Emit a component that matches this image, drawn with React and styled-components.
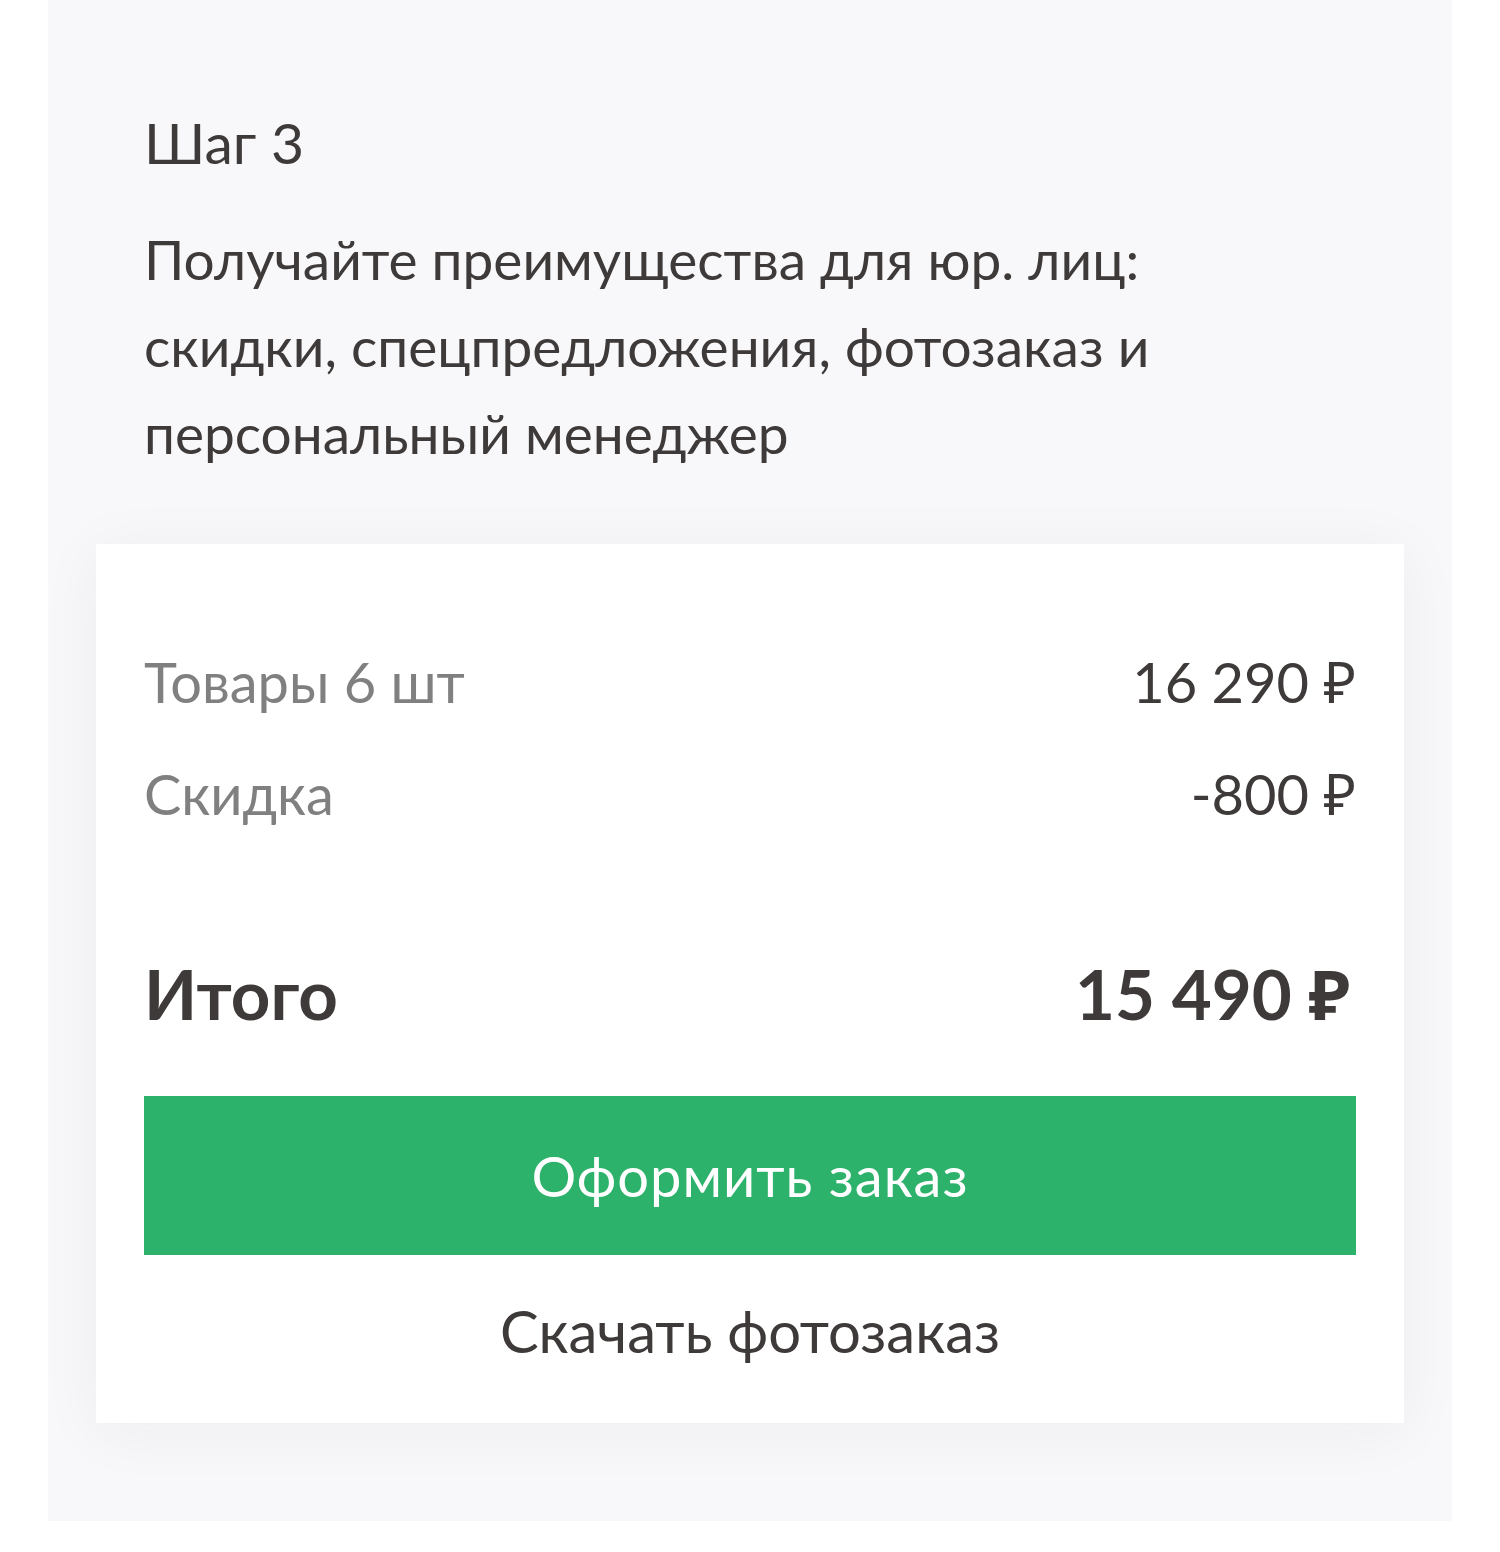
import React from 'react'
import styled, { createGlobalStyle } from 'styled-components'

const GlobalStyle = createGlobalStyle`
  body {
    margin: 0;
    background: #ffffff;
    font-family: Lato, "Noto Sans", sans-serif;
    color: #3e3a39;
  }
`

const Page = styled.div`
  padding: 0 48px 32px;
`

const Panel = styled.section`
  background: #f8f8fa;
  padding: 98px 48px 98px;
`

const Intro = styled.div`
  padding: 0 48px 67px;
`

const StepTitle = styled.h2`
  margin: 0 0 30px;
  font-size: 57px;
  line-height: 88px;
  font-weight: 400;
`

const Lead = styled.p`
  margin: 0;
  font-size: 55px;
  line-height: 87px;
  max-width: 1100px;
`

const Card = styled.div`
  background: #ffffff;
  padding: 82px 48px 18px;
  box-shadow: 0 8px 60px rgba(40, 40, 70, 0.05);
`

const Row = styled.div`
  display: flex;
  justify-content: space-between;
  align-items: baseline;
  font-size: 56px;
  line-height: 112px;
  margin-top: ${p => (p.$total ? '88px' : '0')};
  margin-bottom: ${p => (p.$total ? '46px' : '0')};
`

const Label = styled.span`
  color: ${p => (p.$strong ? '#3e3a39' : '#808080')};
  font-weight: ${p => (p.$strong ? 700 : 400)};
  font-size: ${p => (p.$strong ? '69px' : 'inherit')};
`

const Amount = styled.span`
  color: #3e3a39;
  font-weight: ${p => (p.$strong ? 700 : 400)};
  font-size: ${p => (p.$strong ? '69px' : 'inherit')};
  padding-right: ${p => (p.$strong ? '6px' : '0')};
`

const PrimaryButton = styled.button`
  display: block;
  width: 100%;
  height: 159px;
  border: 0;
  border-radius: 0;
  background: #2db26b;
  color: #ffffff;
  font-family: inherit;
  font-size: 56px;
  letter-spacing: 1px;
  cursor: pointer;
`

const LinkButton = styled.button`
  display: block;
  width: 100%;
  height: 150px;
  border: 0;
  background: none;
  color: #3e3a39;
  font-family: inherit;
  font-size: 58px;
  cursor: pointer;
`

const summary = [
  { label: 'Товары 6 шт', value: '16 290 ₽' },
  { label: 'Скидка', value: '-800 ₽' },
]

export default function App() {
  return (
    <>
      <GlobalStyle />
      <Page>
        <Panel>
          <Intro>
            <StepTitle>Шаг 3</StepTitle>
            <Lead>
              Получайте преимущества для юр. лиц: скидки, спецпредложения, фотозаказ и персональный менеджер
            </Lead>
          </Intro>
          <Card>
            {summary.map(item => (
              <Row key={item.label}>
                <Label>{item.label}</Label>
                <Amount>{item.value}</Amount>
              </Row>
            ))}
            <Row $total>
              <Label $strong>Итого</Label>
              <Amount $strong>15 490 ₽</Amount>
            </Row>
            <PrimaryButton>Оформить заказ</PrimaryButton>
            <LinkButton>Скачать фотозаказ</LinkButton>
          </Card>
        </Panel>
      </Page>
    </>
  )
}
